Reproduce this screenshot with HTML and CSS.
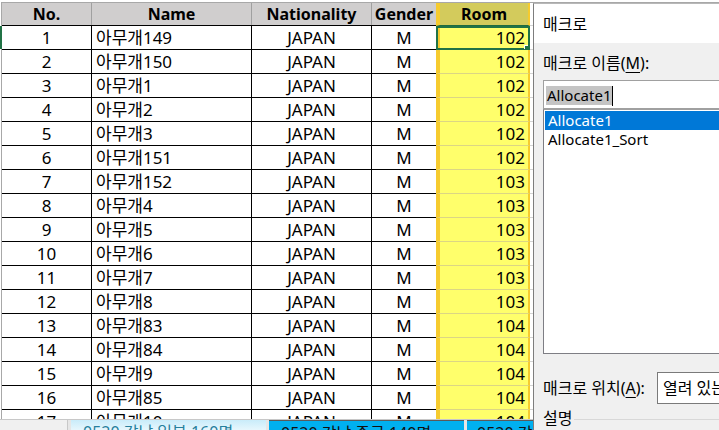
FILE: index.html
```html
<!DOCTYPE html>
<html lang="ko">
<head>
    <meta charset="UTF-8">
    <title>매크로</title>
    <link rel="stylesheet" href="styles.css">
</head>
<body>

<div class="screen">
    <div class="sheet">
        <div class="grid">
            <div class="row head">
                <div class="cell c-no">No.</div>
                <div class="cell c-name">Name</div>
                <div class="cell c-nat">Nationality</div>
                <div class="cell c-gen">Gender</div>
                <div class="cell c-room">Room</div>
                <div class="cell c-rest"></div>
            </div>
            <div class="row first">
                <div class="cell c-no">1</div><div class="cell c-name">아무개149</div><div class="cell c-nat">JAPAN</div><div class="cell c-gen">M</div><div class="cell c-room active">102</div><div class="cell c-rest"></div>
            </div>
            <div class="row">
                <div class="cell c-no">2</div><div class="cell c-name">아무개150</div><div class="cell c-nat">JAPAN</div><div class="cell c-gen">M</div><div class="cell c-room">102</div><div class="cell c-rest"></div>
            </div>
            <div class="row">
                <div class="cell c-no">3</div><div class="cell c-name">아무개1</div><div class="cell c-nat">JAPAN</div><div class="cell c-gen">M</div><div class="cell c-room">102</div><div class="cell c-rest"></div>
            </div>
            <div class="row">
                <div class="cell c-no">4</div><div class="cell c-name">아무개2</div><div class="cell c-nat">JAPAN</div><div class="cell c-gen">M</div><div class="cell c-room">102</div><div class="cell c-rest"></div>
            </div>
            <div class="row">
                <div class="cell c-no">5</div><div class="cell c-name">아무개3</div><div class="cell c-nat">JAPAN</div><div class="cell c-gen">M</div><div class="cell c-room">102</div><div class="cell c-rest"></div>
            </div>
            <div class="row">
                <div class="cell c-no">6</div><div class="cell c-name">아무개151</div><div class="cell c-nat">JAPAN</div><div class="cell c-gen">M</div><div class="cell c-room">102</div><div class="cell c-rest"></div>
            </div>
            <div class="row">
                <div class="cell c-no">7</div><div class="cell c-name">아무개152</div><div class="cell c-nat">JAPAN</div><div class="cell c-gen">M</div><div class="cell c-room">103</div><div class="cell c-rest"></div>
            </div>
            <div class="row">
                <div class="cell c-no">8</div><div class="cell c-name">아무개4</div><div class="cell c-nat">JAPAN</div><div class="cell c-gen">M</div><div class="cell c-room">103</div><div class="cell c-rest"></div>
            </div>
            <div class="row">
                <div class="cell c-no">9</div><div class="cell c-name">아무개5</div><div class="cell c-nat">JAPAN</div><div class="cell c-gen">M</div><div class="cell c-room">103</div><div class="cell c-rest"></div>
            </div>
            <div class="row">
                <div class="cell c-no">10</div><div class="cell c-name">아무개6</div><div class="cell c-nat">JAPAN</div><div class="cell c-gen">M</div><div class="cell c-room">103</div><div class="cell c-rest"></div>
            </div>
            <div class="row">
                <div class="cell c-no">11</div><div class="cell c-name">아무개7</div><div class="cell c-nat">JAPAN</div><div class="cell c-gen">M</div><div class="cell c-room">103</div><div class="cell c-rest"></div>
            </div>
            <div class="row">
                <div class="cell c-no">12</div><div class="cell c-name">아무개8</div><div class="cell c-nat">JAPAN</div><div class="cell c-gen">M</div><div class="cell c-room">103</div><div class="cell c-rest"></div>
            </div>
            <div class="row">
                <div class="cell c-no">13</div><div class="cell c-name">아무개83</div><div class="cell c-nat">JAPAN</div><div class="cell c-gen">M</div><div class="cell c-room">104</div><div class="cell c-rest"></div>
            </div>
            <div class="row">
                <div class="cell c-no">14</div><div class="cell c-name">아무개84</div><div class="cell c-nat">JAPAN</div><div class="cell c-gen">M</div><div class="cell c-room">104</div><div class="cell c-rest"></div>
            </div>
            <div class="row">
                <div class="cell c-no">15</div><div class="cell c-name">아무개9</div><div class="cell c-nat">JAPAN</div><div class="cell c-gen">M</div><div class="cell c-room">104</div><div class="cell c-rest"></div>
            </div>
            <div class="row">
                <div class="cell c-no">16</div><div class="cell c-name">아무개85</div><div class="cell c-nat">JAPAN</div><div class="cell c-gen">M</div><div class="cell c-room">104</div><div class="cell c-rest"></div>
            </div>
            <div class="row">
                <div class="cell c-no">17</div><div class="cell c-name">아무개10</div><div class="cell c-nat">JAPAN</div><div class="cell c-gen">M</div><div class="cell c-room">104</div><div class="cell c-rest"></div>
            </div>
        </div>
    </div>

    <div class="tabs">
        <div class="tab tab-plain"></div>
        <div class="tab tab-light">0520 강남 일부 160명</div>
        <div class="tab tab-cyan">0520 강남 중국 140명</div>
        <div class="tab tab-cyan tab-last">0520 강남 일부</div>
    </div>

    <div class="dialog">
        <div class="dialog-title">매크로</div>
        <div class="dialog-body">
            <div class="label">매크로 이름(<u>M</u>):</div>
            <div class="name-input"><span class="sel">Allocate1</span><span class="caret"></span></div>
            <div class="listbox">
                <div class="item selected">Allocate1</div>
                <div class="item">Allocate1_Sort</div>
            </div>
            <div class="where">
                <span class="label where-label">매크로 위치(<u>A</u>):</span>
                <div class="combo">열려 있는 모든 통합 문서</div>
            </div>
            <div class="desc">
                <span class="label">설명</span>
                <span class="rule"></span>
            </div>
        </div>
    </div>
</div>

</body>
</html>
```

FILE: styles.css
```css
html, body {
    margin: 0;
    padding: 0;
    overflow: hidden;
    background-color: #fff;
}

body {
    font-family: "Noto Sans", "Noto Sans CJK KR", sans-serif;
    color: #000;
}

.screen {
    position: relative;
    width: 719px;
    height: 430px;
    overflow: hidden;
    display: flex;
    flex-direction: column;
}

/* spreadsheet */

.sheet {
    height: 419px;
    flex: none;
    overflow: hidden;
    padding-top: 2px;
    box-sizing: border-box;
}

.grid {
    margin-left: 1px;
    border-left: 1px solid #a8a8a8;
}

.row {
    display: flex;
    height: 24px;
    box-sizing: border-box;
    border-bottom: 1px solid #000;
    font-size: 17px;
    line-height: 23px;
}

.row.head {
    border-top: 1px solid #a8a8a8;
    border-bottom: 1px solid #000;
    height: 24px;
    font-size: 16px;
    line-height: 22px;
    font-weight: bold;
    background-color: #d0cece;
}

.cell {
    flex: none;
    box-sizing: border-box;
    border-right: 1px solid #000;
    white-space: nowrap;
    overflow: hidden;
}

.head .cell {
    border-right-color: #a0a0a0;
}

.c-no {
    width: 90px;
    text-align: center;
}

.c-name {
    width: 160px;
    padding-left: 4px;
}

.head .c-name {
    padding-left: 0;
    text-align: center;
}

.c-nat {
    width: 120px;
    text-align: center;
}

.c-gen {
    width: 64px;
    text-align: center;
    border-right: none;
}

.c-room {
    width: 94px;
    text-align: right;
    padding-right: 3px;
    background-color: #ffff6b;
    border-left: 4px solid #f6cb2e;
    border-right: 2px solid #f6cb2e;
    margin-bottom: -1px;
    border-bottom: 1px solid #dcd684;
}

.head .c-room {
    text-align: center;
    padding-right: 0;
    background-color: #d3cb5c;
    border-right: 2px solid #f6cb2e;
    border-bottom-color: #1f6b3f;
}

.c-rest {
    flex: 1;
    border-right: none;
    margin-bottom: -1px;
    border-bottom: 1px solid #d4d4d4;
}

.head .c-rest {
    background-color: #fff;
}

.first .c-no {
    box-shadow: inset 2px 0 0 #217346;
    margin-left: -2px;
    width: 92px;
    padding-left: 2px;
}

.active {
    position: relative;
    outline: 2px solid #217346;
    outline-offset: -2px;
}

.active::after {
    content: "";
    position: absolute;
    right: -3px;
    bottom: -3px;
    width: 5px;
    height: 5px;
    background-color: #217346;
    border: 1px solid #fff;
    z-index: 2;
}

/* sheet tabs */

.tabs {
    flex: none;
    display: flex;
    gap: 3px;
    height: 30px;
    border-top: 1px solid #c8c8c8;
    background-color: #e6e6e6;
    font-size: 16px;
    line-height: 24px;
}

.tab {
    box-sizing: border-box;
    padding-left: 12px;
    white-space: nowrap;
    overflow: hidden;
}

.tab-plain {
    width: 68px;
    background-color: #f0f0f0;
    border-right: 1px solid #c8c8c8;
}

.tab-light {
    width: 195px;
    color: #267f9d;
    background: linear-gradient(#c9ecfa, #ffffff 60%);
}

.tab-cyan {
    width: 195px;
    background-color: #00b0f0;
    color: #111;
    border-top: 1px solid #5a5a5a;
}

.tab-last {
    width: 80px;
    padding-left: 10px;
}

/* macro dialog */

.dialog {
    position: absolute;
    left: 533px;
    top: 3px;
    width: 200px;
    height: 440px;
    box-sizing: border-box;
    border-left: 1px solid #7d7d7d;
    border-top: 1px solid #b8b8b8;
    background-color: #f0f0f0;
    font-size: 15px;
}

.dialog-title {
    height: 39px;
    line-height: 40px;
    padding-left: 9px;
    background-color: #fff;
    font-size: 16px;
}

.dialog-body {
    padding: 9px 0 0 9px;
}

.dialog-body .label {
    line-height: 22px;
    font-size: 16px;
}

.dialog-body u {
    text-decoration-thickness: 1px;
    text-underline-offset: 3px;
}

.name-input {
    margin-top: 6px;
    height: 29px;
    box-sizing: border-box;
    border: 1px solid #a0a0a0;
    border-right: none;
    background-color: #fff;
    padding: 2px 0 0 2px;
    display: flex;
    align-items: center;
}

.sel {
    background-color: #c4c4c4;
    line-height: 19px;
    padding: 0 1px;
}

.caret {
    width: 1px;
    height: 20px;
    background-color: #000;
}

.listbox {
    height: 245px;
    box-sizing: border-box;
    border: 1px solid #7e7e84;
    border-top: 1px solid #a0a0a0;
    border-right: none;
    background-color: #fff;
    padding-top: 1px;
}

.item {
    height: 19px;
    line-height: 19px;
    padding-left: 3px;
    margin-left: 1px;
}

.item.selected {
    background-color: #0078d7;
    color: #fff;
}

.where {
    margin-top: 18px;
    display: flex;
    align-items: center;
}

.where-label {
    width: 114px;
    flex: none;
}

.combo {
    height: 32px;
    box-sizing: border-box;
    border: 1px solid #7a7a7a;
    border-right: none;
    background-color: #fff;
    padding-left: 5px;
    line-height: 30px;
    font-size: 16px;
    white-space: nowrap;
    flex: 1;
    overflow: hidden;
}

.desc {
    margin-top: 3px;
    display: flex;
    align-items: center;
    gap: 2px;
}

.rule {
    flex: 1;
    height: 1px;
    background-color: #d8d8d8;
    margin-top: 2px;
}
```
